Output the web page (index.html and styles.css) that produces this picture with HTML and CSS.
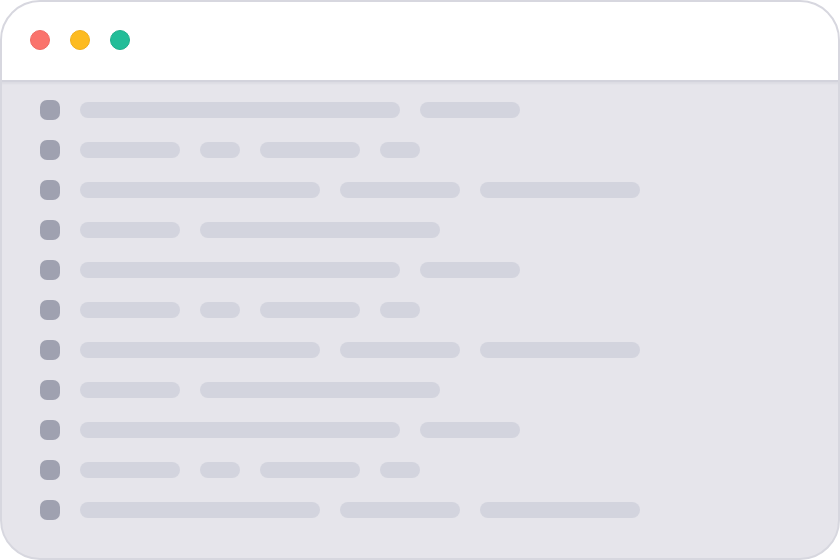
FILE: index.html
```html
<!DOCTYPE html>
<html lang="en">
<head>
  <meta charset="UTF-8" />
  <title>Loading</title>
  <link rel="stylesheet" href="styles.css">
</head>
<body>
  <div class="window">
    <!-- Title bar -->
    <div class="titleBar">
      <span class="dot red"></span>
      <span class="dot yellow"></span>
      <span class="dot green"></span>
    </div>

    <!-- Skeleton rows -->
    <ul class="rows">
      <li class="row"><span class="icon"></span><span class="bar w320"></span><span class="bar w100"></span></li>
      <li class="row"><span class="icon"></span><span class="bar w100"></span><span class="bar w40"></span><span class="bar w100"></span><span class="bar w40"></span></li>
      <li class="row"><span class="icon"></span><span class="bar w240"></span><span class="bar w120"></span><span class="bar w160"></span></li>
      <li class="row"><span class="icon"></span><span class="bar w100"></span><span class="bar w240"></span></li>
      <li class="row"><span class="icon"></span><span class="bar w320"></span><span class="bar w100"></span></li>
      <li class="row"><span class="icon"></span><span class="bar w100"></span><span class="bar w40"></span><span class="bar w100"></span><span class="bar w40"></span></li>
      <li class="row"><span class="icon"></span><span class="bar w240"></span><span class="bar w120"></span><span class="bar w160"></span></li>
      <li class="row"><span class="icon"></span><span class="bar w100"></span><span class="bar w240"></span></li>
      <li class="row"><span class="icon"></span><span class="bar w320"></span><span class="bar w100"></span></li>
      <li class="row"><span class="icon"></span><span class="bar w100"></span><span class="bar w40"></span><span class="bar w100"></span><span class="bar w40"></span></li>
      <li class="row"><span class="icon"></span><span class="bar w240"></span><span class="bar w120"></span><span class="bar w160"></span></li>
    </ul>
  </div>
</body>
</html>
```

FILE: styles.css
```css
html, body {
  margin: 0;
  padding: 0;
  background-color: #ffffff;
  font-family: "Liberation Sans", Arial, sans-serif;
}

.window {
  box-sizing: border-box;
  width: 840px;
  height: 560px;
  border: 2px solid #d7d7df;
  border-radius: 40px;
  background-color: #e6e5eb;
  overflow: hidden;
}

.titleBar {
  box-sizing: border-box;
  height: 80px;
  display: flex;
  align-items: center;
  gap: 20px;
  padding: 0 0 2px 28px;
  background-color: #ffffff;
  border-bottom: 2px solid #d3d3dc;
}

.dot {
  box-sizing: border-box;
  width: 20px;
  height: 20px;
  border-radius: 50%;
}

.dot.red {
  background-color: #fa736c;
  border: 1px solid #ee6a64;
}

.dot.yellow {
  background-color: #fdbb1f;
  border: 1px solid #f0ae1c;
}

.dot.green {
  background-color: #22bd98;
  border: 1px solid #1fae8c;
}

.rows {
  list-style: none;
  margin: 0;
  padding: 8px 0 0 38px;
  box-shadow: inset 0 3px 2px -1px #dcdce3;
}

.row {
  height: 40px;
  display: flex;
  align-items: center;
  gap: 20px;
}

.icon {
  width: 20px;
  height: 20px;
  border-radius: 7px;
  background-color: #9fa1b0;
}

.bar {
  height: 16px;
  border-radius: 8px;
  background-color: #d3d4de;
}

.w40 { width: 40px; }
.w100 { width: 100px; }
.w120 { width: 120px; }
.w160 { width: 160px; }
.w240 { width: 240px; }
.w320 { width: 320px; }
```
